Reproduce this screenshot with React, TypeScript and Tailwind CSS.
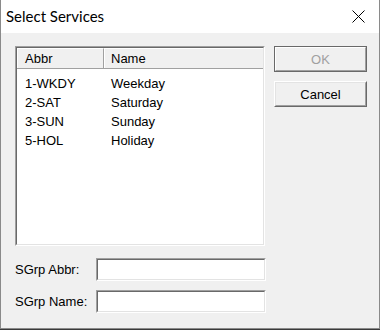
import React from "react";

const rows: [string, string][] = [
  ["1-WKDY", "Weekday"],
  ["2-SAT", "Saturday"],
  ["3-SUN", "Sunday"],
  ["5-HOL", "Holiday"],
];

function Sunken({ className, children }: { className: string; children?: React.ReactNode }) {
  return (
    <div className={"border border-t-[#a0a0a0] border-l-[#a0a0a0] border-b-white border-r-white " + className}>
      <div className="w-full h-full border border-t-[#696969] border-l-[#696969] border-b-[#e3e3e3] border-r-[#e3e3e3] bg-white">
        {children}
      </div>
    </div>
  );
}

export default function App() {
  return (
    <div className="w-[380px] h-[330px] flex flex-col bg-white font-['Liberation_Sans',Arial,sans-serif] text-[13px] text-black leading-none">
      <div className="h-[33px] shrink-0 flex items-center justify-between border-x border-[#8a8a8a] bg-white pl-[5px] pr-[14px]">
        <span className="font-['Lato',sans-serif] text-[15px] text-black">Select Services</span>
        <svg width="13" height="13" viewBox="0 0 13 13">
          <path d="M0.5 0.5 L12.5 12.5 M12.5 0.5 L0.5 12.5" stroke="#000" strokeWidth="1" fill="none" />
        </svg>
      </div>
      <div className="flex-1 flex bg-[#f0f0f0] border-x border-b border-[#8a8a8a] pt-[13px] pl-[14px]">
        <div className="w-[251px] flex flex-col">
          <Sunken className="w-[250px] h-[200px]">
            <div className="h-[21px] flex bg-[#f0f0f0] border-b border-[#a0a0a0]">
              <div className="w-[87px] flex items-center pl-[7px] border-t border-l border-white border-r border-r-[#a0a0a0]">Abbr</div>
              <div className="flex-1 flex items-center pl-[6px] border-t border-l border-white">Name</div>
            </div>
            <div className="pt-[5px]">
              {rows.map(([a, n]) => (
                <div key={a} className="h-[19px] flex items-center">
                  <div className="w-[87px] pl-[8px]">{a}</div>
                  <div className="pl-[7px]">{n}</div>
                </div>
              ))}
            </div>
          </Sunken>
          <div className="mt-[12px] flex items-center">
            <div className="w-[81px]">SGrp Abbr:</div>
            <Sunken className="w-[170px] h-[23px]" />
          </div>
          <div className="mt-[9px] flex items-center">
            <div className="w-[81px]">SGrp Name:</div>
            <Sunken className="w-[170px] h-[23px]" />
          </div>
        </div>
        <div className="ml-[8px] flex flex-col">
          <div className="w-[93px] h-[26px] border border-[#696969]">
            <div className="w-full h-full border border-t-white border-l-white border-b-[#a0a0a0] border-r-[#a0a0a0] flex items-center justify-center text-[#a0a0a0]">
              OK
            </div>
          </div>
          <div className="mt-[9px] w-[93px] h-[26px] border border-t-white border-l-white border-b-[#696969] border-r-[#696969]">
            <div className="w-full h-full border border-t-[#e3e3e3] border-l-[#e3e3e3] border-b-[#a0a0a0] border-r-[#a0a0a0] flex items-center justify-center">
              Cancel
            </div>
          </div>
        </div>
      </div>
      <div className="h-[1px] bg-[#3a3a3a] shrink-0" />
    </div>
  );
}
